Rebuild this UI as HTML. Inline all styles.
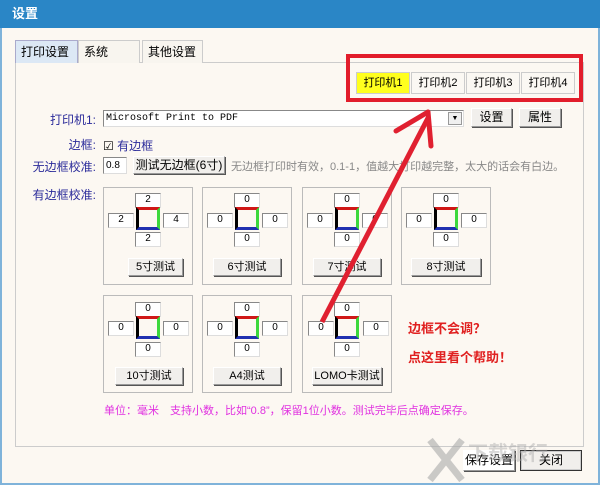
<!DOCTYPE html>
<html><head><meta charset="utf-8"><style>
*{margin:0;padding:0;box-sizing:border-box}
body{width:600px;height:485px;background:#fcf8f2;font-family:"Liberation Sans","Noto Sans CJK SC",sans-serif;font-size:12px;position:relative;overflow:hidden;color:#000}
.a{position:absolute}
.win{left:0;top:0;width:600px;height:485px;border:2px solid #7fb3da;border-top:none}
.title{left:0;top:0;width:600px;height:28px;background:#2a86c6;color:#fff;font-size:13px;line-height:28px;padding-left:12px;font-weight:bold}
.tab{top:40px;height:23px;border:1px solid #ccc;border-bottom:none;background:#f8f5ef;line-height:22px;padding-left:5px;font-size:12px}
.panel{left:15px;top:62px;width:569px;height:385px;border:1px solid #ccc}
.ptab{top:72px;height:22px;width:54px;border:1px solid #ccc;background:#fbf8f3;text-align:center;line-height:21px;font-size:11px}
.lbl{color:#2b2b9a;font-size:12px;text-align:right;width:90px}
.inp{background:#fff;border:1px solid #888;border-right-color:#ddd;border-bottom-color:#ddd;font-size:10px;text-align:center;line-height:12px;height:15px;width:26px}
.btn{background:#f1efec;border:1px solid #999;border-top-color:#fff;border-left-color:#fff;box-shadow:1px 1px 0 #555;text-align:center;font-size:11px}
.box{width:90px;height:98px;border:1px solid #bbb}
.sq{width:24px;height:23px;border-top:3px solid #d01818;border-right:3px solid #3cd83c;border-bottom:3px solid #2030b0;border-left:3px solid #000}
</style></head><body>
<div class="a win"></div>
<div class="a title">设置</div>
<div class="a panel"></div>
<div class="a tab" style="left:15px;width:63px;background:#dce8f5;border-color:#aac">打印设置</div>
<div class="a tab" style="left:78px;width:62px">系统</div>
<div class="a tab" style="left:142px;width:61px">其他设置</div>

<div class="a" style="left:346px;top:54px;width:237px;height:48px;border:4px solid #e21d2b"></div>
<div class="a ptab" style="left:356px;background:#ffff1e">打印机1</div>
<div class="a ptab" style="left:411px">打印机2</div>
<div class="a ptab" style="left:466px">打印机3</div>
<div class="a ptab" style="left:521px">打印机4</div>

<div class="a lbl" style="left:6px;top:111px">打印机1:</div>
<div class="a" style="left:103px;top:110px;width:361px;height:17px;background:#fff;border:1px solid #888;border-right-color:#ddd;border-bottom-color:#ddd;font-family:'Liberation Mono',monospace;font-size:10px;line-height:15px;padding-left:2px">Microsoft Print to PDF</div>
<div class="a" style="left:448px;top:112px;width:14px;height:13px;border:1px solid #999;background:#f0f0f0;font-size:7px;text-align:center;line-height:12px">▼</div>
<div class="a btn" style="left:471px;top:108px;width:41px;height:19px;line-height:17px;font-size:12px">设置</div>
<div class="a btn" style="left:519px;top:108px;width:42px;height:19px;line-height:17px;font-size:12px">属性</div>

<div class="a lbl" style="left:6px;top:136px">边框:</div>
<div class="a" style="left:103px;top:137px;font-size:12px;color:#2b2b9a"><span style="color:#000">☑</span> 有边框</div>

<div class="a lbl" style="left:6px;top:158px">无边框校准:</div>
<div class="a inp" style="left:103px;top:157px;width:24px;height:17px;text-align:left;padding-left:2px;line-height:15px">0.8</div>
<div class="a btn" style="left:133px;top:156px;width:92px;height:18px;line-height:16px;font-size:12px">测试无边框(6寸)</div>
<div class="a" style="left:231px;top:158px;color:#888;font-size:11px;white-space:nowrap">无边框打印时有效，0.1-1，值越大打印越完整，太大的话会有白边。</div>

<div class="a lbl" style="left:6px;top:186px">有边框校准:</div>

<div class="a box" style="left:103px;top:187px"></div>
<div class="a inp" style="left:135px;top:193px">2</div>
<div class="a inp" style="left:108px;top:213px">2</div>
<div class="a sq" style="left:136px;top:207px"></div>
<div class="a inp" style="left:163px;top:213px">4</div>
<div class="a inp" style="left:135px;top:232px">2</div>
<div class="a btn" style="left:128px;top:258px;width:55px;height:18px;line-height:16px">5寸测试</div>

<div class="a box" style="left:202px;top:187px"></div>
<div class="a inp" style="left:234px;top:193px">0</div>
<div class="a inp" style="left:207px;top:213px">0</div>
<div class="a sq" style="left:235px;top:207px"></div>
<div class="a inp" style="left:262px;top:213px">0</div>
<div class="a inp" style="left:234px;top:232px">0</div>
<div class="a btn" style="left:213px;top:258px;width:68px;height:18px;line-height:16px">6寸测试</div>

<div class="a box" style="left:302px;top:187px"></div>
<div class="a inp" style="left:334px;top:193px">0</div>
<div class="a inp" style="left:307px;top:213px">0</div>
<div class="a sq" style="left:335px;top:207px"></div>
<div class="a inp" style="left:362px;top:213px">0</div>
<div class="a inp" style="left:334px;top:232px">0</div>
<div class="a btn" style="left:313px;top:258px;width:68px;height:18px;line-height:16px">7寸测试</div>

<div class="a box" style="left:401px;top:187px"></div>
<div class="a inp" style="left:433px;top:193px">0</div>
<div class="a inp" style="left:406px;top:213px">0</div>
<div class="a sq" style="left:434px;top:207px"></div>
<div class="a inp" style="left:461px;top:213px">0</div>
<div class="a inp" style="left:433px;top:232px">0</div>
<div class="a btn" style="left:411px;top:258px;width:70px;height:18px;line-height:16px">8寸测试</div>

<div class="a box" style="left:103px;top:295px"></div>
<div class="a inp" style="left:135px;top:302px">0</div>
<div class="a inp" style="left:108px;top:321px">0</div>
<div class="a sq" style="left:136px;top:316px"></div>
<div class="a inp" style="left:163px;top:321px">0</div>
<div class="a inp" style="left:135px;top:342px">0</div>
<div class="a btn" style="left:115px;top:367px;width:68px;height:18px;line-height:16px">10寸测试</div>

<div class="a box" style="left:202px;top:295px"></div>
<div class="a inp" style="left:234px;top:302px">0</div>
<div class="a inp" style="left:207px;top:321px">0</div>
<div class="a sq" style="left:235px;top:316px"></div>
<div class="a inp" style="left:262px;top:321px">0</div>
<div class="a inp" style="left:234px;top:342px">0</div>
<div class="a btn" style="left:213px;top:367px;width:68px;height:18px;line-height:16px">A4测试</div>

<div class="a box" style="left:302px;top:295px"></div>
<div class="a inp" style="left:334px;top:302px">0</div>
<div class="a inp" style="left:308px;top:321px">0</div>
<div class="a sq" style="left:335px;top:316px"></div>
<div class="a inp" style="left:363px;top:321px">0</div>
<div class="a inp" style="left:334px;top:342px">0</div>
<div class="a btn" style="left:312px;top:367px;width:70px;height:18px;line-height:16px">LOMO卡测试</div>

<div class="a" style="left:408px;top:318px;color:#e02020;font-size:13px;font-weight:bold">边框不会调？</div>
<div class="a" style="left:408px;top:347px;color:#e02020;font-size:13px;font-weight:bold">点这里看个帮助！</div>

<div class="a" style="left:104px;top:402px;color:#e030e0;font-size:11px;white-space:nowrap">单位：毫米　支持小数，比如“0.8”，保留1位小数。测试完毕后点确定保存。</div>

<svg class="a" style="left:0;top:0" width="600" height="485">
<line x1="322" y1="322" x2="428" y2="118" stroke="#e02030" stroke-width="5"/>
<line x1="428" y1="112" x2="396" y2="131" stroke="#e02030" stroke-width="5" stroke-linecap="round"/>
<line x1="428" y1="112" x2="431" y2="146" stroke="#e02030" stroke-width="5" stroke-linecap="round"/>
</svg>

<div class="a btn" style="left:463px;top:450px;width:52px;height:21px;line-height:19px;font-size:12px;background:#fff">保存设置</div>
<div class="a btn" style="left:520px;top:450px;width:62px;height:21px;line-height:19px;font-size:12px;border:1px solid #333;box-shadow:inset 0 0 0 1px #ccc">关闭</div>
<svg class="a" style="left:0;top:0" width="600" height="485">
<path d="M430 440 L462 480 M462 440 L430 480" stroke="#aaa" stroke-width="7" opacity="0.6"/>
<text x="468" y="460" fill="#aaa" font-size="20" font-weight="bold" font-family="Noto Sans CJK SC,sans-serif" opacity="0.45">下载银行</text>
</svg>
</body></html>
